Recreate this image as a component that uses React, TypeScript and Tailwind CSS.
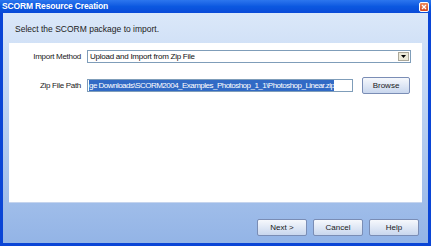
import React from "react";

const font = { fontFamily: '"Liberation Sans", Arial, sans-serif' };

function XpButton({ label, className = "" }: { label: string; className?: string }) {
  return (
    <button
      className={`h-[17px] shrink-0 rounded-[2px] border border-[#7a8db5] bg-gradient-to-b from-[#f6f8fc] to-[#c9d7ee] text-[8px] text-[#1a1a1a] leading-none flex items-center justify-center ${className}`}
    >
      {label}
    </button>
  );
}

export default function App() {
  return (
    <div className="w-[431px] h-[246px] flex flex-col bg-[#0a45d6] overflow-hidden" style={font}>
      {/* Title bar */}
      <div className="h-[13px] shrink-0 flex items-center justify-between bg-gradient-to-b from-[#2c76ee] via-[#0b58e0] to-[#0a4ad8] pl-[2px] pr-[2px]">
        <span className="text-white font-bold text-[8.5px] leading-none tracking-[-0.15px]">SCORM Resource Creation</span>
        <div className="w-[10px] h-[10px] rounded-[2px] border border-white bg-gradient-to-b from-[#f08a5c] to-[#d4461c] flex items-center justify-center">
          <svg width="6" height="6" viewBox="0 0 6 6">
            <path d="M1 1 L5 5 M5 1 L1 5" stroke="white" strokeWidth="1.3" />
          </svg>
        </div>
      </div>

      {/* Body */}
      <div className="flex-1 flex flex-col mx-[3px] mb-[3px] bg-gradient-to-b from-[#dbe8f9] to-[#93b4e6] px-[6px]">
        <div className="h-[30px] shrink-0 flex items-center pl-[6px] pt-[2px]">
          <span className="text-[8.5px] text-[#222]">Select the SCORM package to import.</span>
        </div>

        <div className="h-[160px] shrink-0 bg-white border-b border-[#c5d4ee] flex flex-col pt-[7px] pr-[11px] gap-[14px]">
          <div className="flex items-center h-[13px]">
            <span className="w-[72px] shrink-0 text-right text-[8px] tracking-[-0.3px] text-[#222]">Import Method</span>
            <div className="ml-[6px] flex-1 h-[13px] border border-[#7f9db9] bg-white flex items-center justify-between pl-[2px] pr-[1px]">
              <span className="text-[8px] tracking-[-0.25px] text-[#111] leading-none">Upload and Import from Zip File</span>
              <div className="w-[11px] h-[9px] bg-[#ece9d8] border border-[#aca899] flex items-center justify-center">
                <svg width="5" height="3" viewBox="0 0 5 3">
                  <path d="M0 0 L5 0 L2.5 3 Z" fill="#000" />
                </svg>
              </div>
            </div>
          </div>

          <div className="flex items-center h-[17px]">
            <span className="w-[72px] shrink-0 text-right text-[8px] tracking-[-0.3px] text-[#222]">Zip File Path</span>
            <div className="ml-[6px] w-[266px] shrink-0 h-[13px] border border-[#7f9db9] bg-white flex items-center pl-[1px] overflow-hidden">
              <span className="bg-[#316ac5] text-white text-[8px] leading-[11px] whitespace-nowrap tracking-[-0.52px]">
                ge Downloads\SCORM2004_Examples_Photoshop_1_1\Photoshop_Linear.zip
              </span>
            </div>
            <XpButton label="Browse" className="ml-[9px] w-[48px]" />
          </div>
        </div>

        <div className="flex-1 flex items-end justify-end gap-[6px] pr-[3px] pb-[7px]">
          <XpButton label="Next >" className="w-[50px]" />
          <XpButton label="Cancel" className="w-[50px]" />
          <XpButton label="Help" className="w-[50px]" />
        </div>
      </div>
    </div>
  );
}
